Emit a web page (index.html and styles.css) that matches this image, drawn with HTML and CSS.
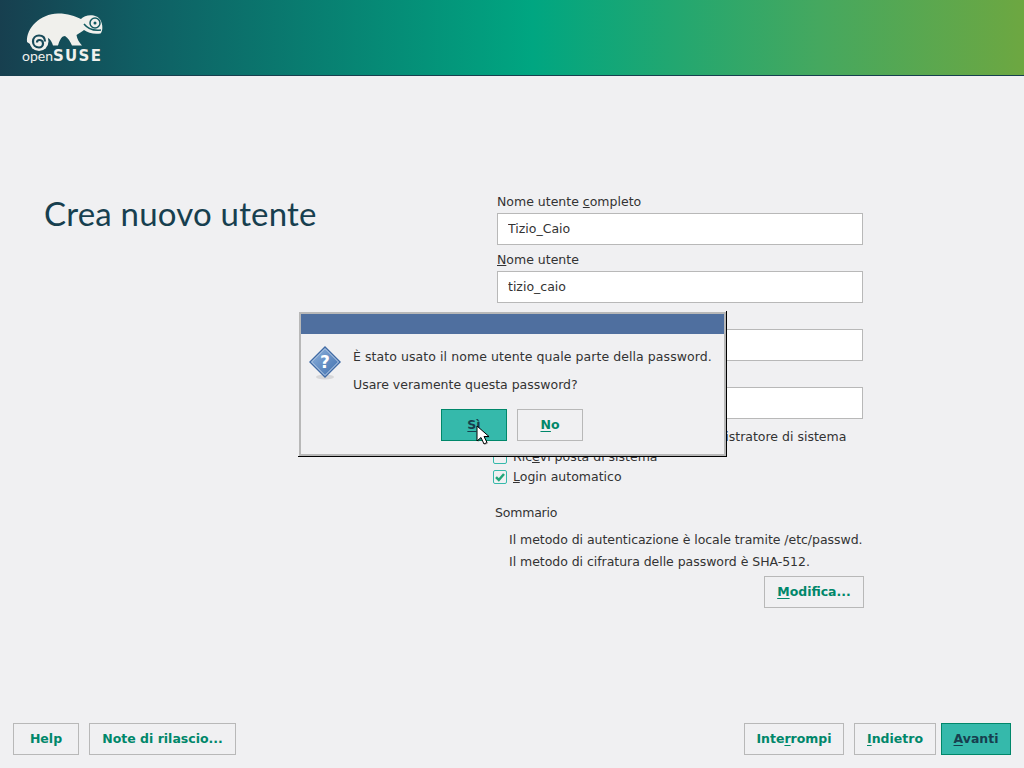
FILE: index.html
```html
<!DOCTYPE html>
<html lang="it">
<head>
<meta charset="utf-8">
<title>Crea nuovo utente</title>
<link rel="stylesheet" href="styles.css">
</head>
<body>
<div class="page">
  <header class="banner">
    <div class="logo">
      <svg class="logo-mark" width="90" height="42" viewBox="20 10 90 42" aria-hidden="true">
        <path class="mark-fill" d="M27 42C26 28 40 14 58 13.500C68 13.500 75 16 81 19C85 14 97 13.500 100.500 20C103 25 103 31 100.500 33.500C94 34.500 88 33 84 30C82 32 79 33 76.500 35C77 39 79 42 82 45.500L72 45.500C70 41 68 38 65 36C62 36 60 39 58 45.500L53 45.500C52 42 50 39 48 38L35 35L30 44Z"/>
        <circle class="mark-fill" cx="39" cy="41.500" r="9.500"/>
        <path class="mark-gap" d="M45 41.500C45 37.500 42.500 35.500 39 35.500C35.500 35.500 33 38 33 41.500C33 45 35.500 47.500 39 47.500C41.500 47.500 43 45.500 43 43.500C43 41 41 40 39.500 40C38 40 37 41 37 42.500"/>
        <circle class="mark-gap-thin" cx="95" cy="23" r="5"/>
        <circle class="mark-pupil" cx="95" cy="23" r="1.500"/>
        <path class="mark-gap-thin" d="M84 24C88 29 94 31 101 30"/>
      </svg>
      <div class="logo-text">open<b>SUSE</b></div>
    </div>
  </header>
  <main class="content">
    <h1 class="title">Crea nuovo utente</h1>
    <form class="form">
      <div class="field">
        <label class="label">Nome utente <u>c</u>ompleto</label>
        <input class="input" type="text" value="Tizio_Caio">
      </div>
      <div class="field">
        <label class="label"><u>N</u>ome utente</label>
        <input class="input" type="text" value="tizio_caio">
      </div>
      <div class="field">
        <label class="label"><u>P</u>assword</label>
        <input class="input" type="text" value="">
      </div>
      <div class="field">
        <label class="label">C<u>o</u>nferma password</label>
        <input class="input" type="text" value="">
      </div>
      <div class="checks">
        <div class="check"><span class="box"></span><span>Usa questa password per l'amministratore di sistema</span></div>
        <div class="check"><span class="box"></span><span>Ric<u>e</u>vi posta di sistema</span></div>
        <div class="check">
          <span class="box">
            <svg width="12" height="12" viewBox="0 0 12 12" aria-hidden="true"><path class="tick" d="M2 6.200L4.800 9L10 3"/></svg>
          </span>
          <span><u>L</u>ogin automatico</span>
        </div>
      </div>
      <div class="summary-title">Sommario</div>
      <div class="summary">
        <div class="summary-line">Il metodo di autenticazione è locale tramite /etc/passwd.</div>
        <div class="summary-line">Il metodo di cifratura delle password è SHA-512.</div>
      </div>
      <div class="form-actions">
        <button class="btn btn-modify" type="button"><u>M</u>odifica...</button>
      </div>
    </form>
  </main>
  <footer class="footer">
    <div class="btn-group">
      <button class="btn btn-help" type="button">Help</button>
      <button class="btn btn-notes" type="button">Note di rilascio...</button>
    </div>
    <div class="btn-group">
      <button class="btn btn-abort" type="button">Inte<u>r</u>rompi</button>
      <button class="btn btn-back" type="button"><u>I</u>ndietro</button>
      <button class="btn btn-primary btn-next" type="button"><u>A</u>vanti</button>
    </div>
  </footer>
</div>

<div class="dialog-frame">
  <div class="dialog">
    <div class="dialog-bar"></div>
    <div class="dialog-body">
      <div class="dialog-icon">
        <svg width="34" height="36" viewBox="0 0 34 36" aria-hidden="true">
          <defs>
            <linearGradient id="qfill" x1="0" y1="0" x2="1" y2="1">
              <stop offset="0" stop-color="#8fb2dc"/>
              <stop offset="1" stop-color="#3f6fae"/>
            </linearGradient>
          </defs>
          <ellipse class="q-shadow" cx="17" cy="32" rx="9" ry="2.500"/>
          <path class="q-outer" d="M17 1L33 17L17 33L1 17Z"/>
          <path class="q-inner" d="M17 3.500L30.500 17L17 30.500L3.500 17Z"/>
        </svg>
        <span class="q-mark">?</span>
      </div>
      <div class="dialog-text">
        <p class="dialog-line dialog-line-long">È stato usato il nome utente quale parte della password.</p>
        <p class="dialog-line">Usare veramente questa password?</p>
      </div>
    </div>
    <div class="dialog-actions">
      <button class="btn btn-primary btn-yes" type="button"><u>S</u>ì</button>
      <button class="btn btn-no" type="button"><u>N</u>o</button>
    </div>
  </div>
</div>

<svg class="cursor" width="16" height="22" viewBox="0 0 16 22" aria-hidden="true">
  <path class="cursor-shadow" d="M2 2L2 17L6 13.500L9 20L12 18.500L9 12.500L14 12.500Z"/>
  <path class="cursor-arrow" d="M1 1L1 16L5 12.500L8 19L11 17.500L8 11.500L13 11.500Z"/>
</svg>
</body>
</html>
```

FILE: styles.css
```css
* { box-sizing: border-box; }
html, body { margin: 0; padding: 0; }
body {
  width: 1024px;
  height: 768px;
  overflow: hidden;
  background: #f0f0f2;
  color: #333;
  font: 12.500px/18px "DejaVu Sans", sans-serif;
}
.page { display: flex; flex-direction: column; height: 768px; }

.banner {
  height: 76px;
  flex: none;
  border-bottom: 1px solid #173f4f;
  background: linear-gradient(90deg, #173f4f 0, #0f5f64 14%, #00a681 52%, #45a85f 80%, #6da741 100%);
  padding: 10px 0 0 20px;
}
.logo { position: relative; width: 90px; height: 54px; }
.logo-mark { display: block; }
.mark-fill { fill: #f0f0ec; }
.mark-gap { fill: none; stroke: #174a59; stroke-width: 2.200; }
.mark-gap-thin { fill: none; stroke: #125a60; stroke-width: 1.500; }
.mark-pupil { fill: #125a60; }
.logo-text {
  position: absolute;
  left: 2px;
  top: 38px;
  color: #f0f0ec;
  font: 14px/16px "Lato", sans-serif;
  white-space: nowrap;
}
.logo-text b { font: 700 15px/16px "DejaVu Sans", sans-serif; letter-spacing: 1.300px; }

.content { flex: 1; display: flex; min-height: 0; }
.title {
  width: 493px;
  margin: 0;
  padding: 117px 0 0 44px;
  flex: none;
  color: #173f4f;
  font: 400 33px/40px "Lato", sans-serif;
  letter-spacing: 0.200px;
}
.form { width: 371px; padding-top: 117px; }
.field { margin: 0 0 6px 4px; width: 366px; }
.label { display: block; height: 17px; margin-bottom: 3px; }
.input {
  display: block;
  width: 366px;
  height: 32px;
  padding: 0 10px 2px;
  border: 1px solid #b8b8b8;
  background: #fff;
  color: #333;
  font: 12.500px "DejaVu Sans", sans-serif;
  outline: none;
}
.checks { margin-top: 8px; }
.check { display: flex; align-items: center; gap: 6px; height: 20px; white-space: nowrap; }
.box {
  flex: none;
  display: flex;
  align-items: center;
  justify-content: center;
  width: 14px;
  height: 14px;
  border: 1px solid #35b9ab;
  border-radius: 2px;
  background: #f0f0f2;
}
.tick { fill: none; stroke: #21a67a; stroke-width: 2.500; }
.summary-title { margin: 17px 0 0 2px; letter-spacing: -0.200px; }
.summary { margin: 7px 0 0 16px; }
.summary-line { height: 22px; line-height: 22px; white-space: nowrap; letter-spacing: -0.040px; }
.form-actions { display: flex; justify-content: flex-end; margin-top: 3px; }

.btn {
  height: 32px;
  padding: 0 0 2px;
  border: 1px solid #b8b8b8;
  background: #f0f0f2;
  color: #00876a;
  font: 700 12.500px "DejaVu Sans", sans-serif;
  white-space: nowrap;
}
.btn u { text-underline-offset: 2px; }
.btn-primary { background: #35b9ab; border-color: #00876a; color: #173f4f; }
.btn-modify { width: 100px; }
.btn-help { width: 66px; }
.btn-notes { width: 147px; margin-left: 10px; }
.btn-abort { width: 100px; }
.btn-back { width: 82px; margin-left: 10px; }
.btn-next { width: 70px; margin-left: 5px; }
.btn-yes, .btn-no { width: 66px; }

.footer { flex: none; display: flex; justify-content: space-between; padding: 0 13px 13px; }
.btn-group { display: flex; }

.dialog-frame {
  position: absolute;
  left: 298px;
  top: 311px;
  width: 429px;
  height: 146px;
  padding: 1px 0 0 1px;
  border-right: 1px solid #000;
  border-bottom: 1px solid #000;
}
.dialog { height: 144px; border: 2px solid #b8b8b8; background: #f0f0f2; }
.dialog-bar { height: 20px; background: #4f6f9f; }
.dialog-body { display: flex; height: 75px; padding: 11px 0 0 7px; }
.dialog-icon { position: relative; width: 34px; height: 36px; flex: none; }
.dialog-icon svg { display: block; }
.q-shadow { fill: #000; opacity: 0.100; }
.q-outer { fill: #3f6aa5; }
.q-inner { fill: url(#qfill); stroke: #c6d8ee; stroke-width: 1; }
.q-mark {
  position: absolute;
  left: 0;
  top: 6px;
  width: 34px;
  text-align: center;
  color: #fff;
  font: 700 17px/22px "DejaVu Sans", sans-serif;
}
.dialog-text { margin-left: 11px; padding-top: 3px; }
.dialog-line { margin: 0 0 10px; white-space: nowrap; }
.dialog-line-long { letter-spacing: 0.070px; }
.dialog-actions { display: flex; gap: 10px; padding-left: 140px; }

.cursor { position: absolute; left: 476px; top: 425px; }
.cursor-shadow { fill: #000; opacity: 0.250; }
.cursor-arrow { fill: #fff; stroke: #000; stroke-width: 1; }
```
